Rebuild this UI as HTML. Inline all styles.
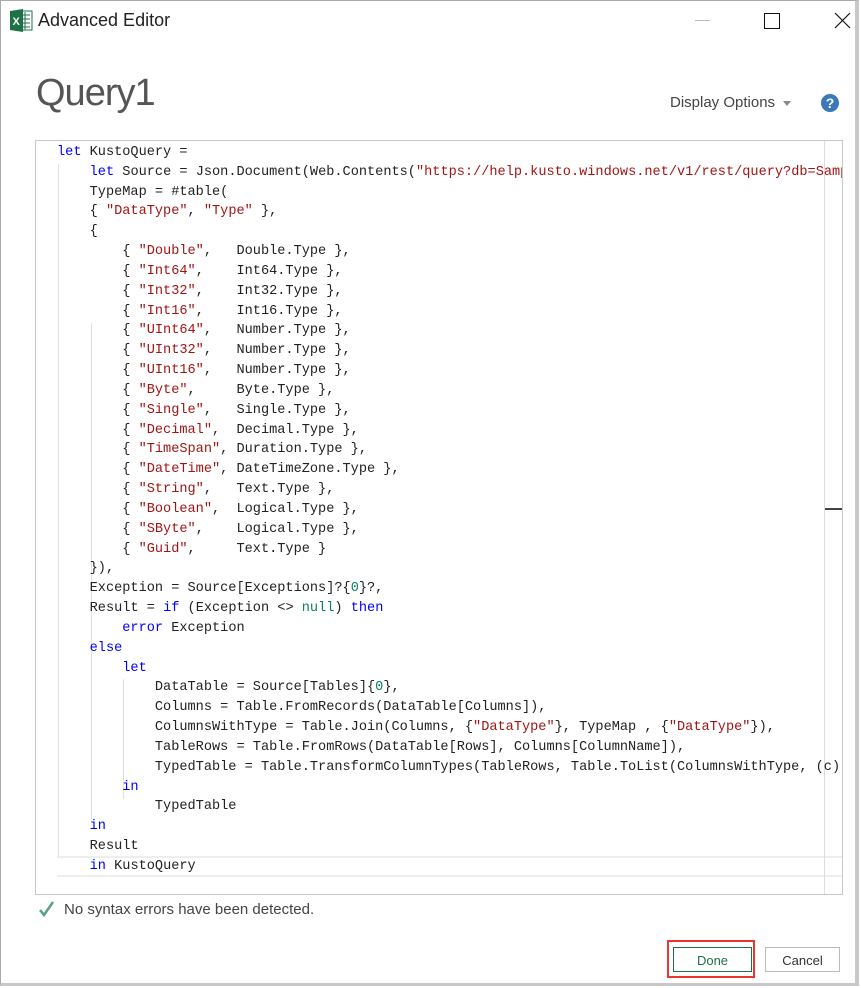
<!DOCTYPE html>
<html><head><meta charset="utf-8"><style>
body{margin:0;width:861px;height:988px;background:#fff;position:relative;overflow:hidden;font-family:"Liberation Sans",sans-serif}
.win{position:absolute;left:0;top:0;width:859px;height:986px;border:1px solid #aaa;border-right:4px solid #c8c8c8;border-bottom:3px solid #c8c8c8;box-sizing:border-box}
.title{position:absolute;left:38px;top:10px;font-size:18px;color:#222}
.q{position:absolute;left:36px;top:72px;font-size:38px;color:#555;letter-spacing:-1px}
.disp{position:absolute;left:670px;top:94px;font-size:15px;color:#444}
.help{position:absolute;left:821px;top:94px;width:18px;height:18px;border-radius:50%;background:#3b78b8;color:#fff;font-weight:bold;font-size:14px;text-align:center;line-height:18px}
.ed{position:absolute;left:35px;top:140px;width:808px;height:755px;border:1px solid #c8c8c8;box-sizing:border-box;overflow:hidden}
.code{position:absolute;left:21px;top:2px;white-space:pre;font-family:"Liberation Mono",monospace;font-size:13.6px;line-height:19.83px;color:#222;width:785px;overflow:hidden}
.k{color:#0000ff}.s{color:#a31515}.n{color:#098658}
.sb{position:absolute;left:788px;top:0;width:1px;height:755px;background:#ddd}
.g{position:absolute;width:1px;background:#e0e0e0}
.cur{position:absolute;left:21px;top:715px;width:785px;height:17px;border-top:2px solid #eee;border-bottom:2px solid #eee}
.btn{position:absolute;top:947px;height:25px;font-size:13px;color:#333;text-align:center;line-height:25px;box-sizing:border-box}
</style></head><body>
<div class="win"></div>
<svg style="position:absolute;left:9px;top:8px" width="25" height="25" viewBox="0 0 25 25"><rect x="8" y="3" width="15" height="19" fill="#fff" stroke="#1e7145"/><path d="M12 7h9M12 11h9M12 15h9M12 19h9M16 4v18" stroke="#1e7145" stroke-width="1"/><path d="M1 3l13-2v23l-13-2z" fill="#1e7145"/><text x="3.5" y="17" font-size="11" font-weight="bold" fill="#fff" font-family="Liberation Sans">X</text></svg>
<div class="title">Advanced Editor</div>
<div style="position:absolute;left:695px;top:20px;width:15px;height:1px;background:#bbb"></div>
<div style="position:absolute;left:764px;top:13px;width:14px;height:14px;border:1px solid #111"></div>
<svg style="position:absolute;left:834px;top:12px" width="17" height="17"><path d="M1 1L16 16M16 1L1 16" stroke="#111" stroke-width="1.2"/></svg>
<div class="q">Query1</div>
<div class="disp">Display Options</div>
<div style="position:absolute;left:783px;top:101px;border-left:4px solid transparent;border-right:4px solid transparent;border-top:5px solid #888"></div>
<div class="help">?</div>
<div class="ed">
<div class="cur"></div>
<div class="g" style="left:22px;top:23px;height:693px"></div>
<div class="g" style="left:55px;top:182px;height:360px"></div>
<div class="g" style="left:55px;top:478px;height:20px"></div>
<div class="g" style="left:55px;top:538px;height:140px"></div>
<div class="g" style="left:87px;top:538px;height:120px"></div>
<div class="sb"></div>
<div class="code"><span class="k">let</span> KustoQuery =
    <span class="k">let</span> Source = Json.Document(Web.Contents(<span class="s">"https://help.kusto.windows.net/v1/rest/query?db=Samples&amp;csl=..."</span>
    TypeMap = #table(
    { <span class="s">"DataType"</span>, <span class="s">"Type"</span> },
    {
        { <span class="s">"Double"</span>,   Double.Type },
        { <span class="s">"Int64"</span>,    Int64.Type },
        { <span class="s">"Int32"</span>,    Int32.Type },
        { <span class="s">"Int16"</span>,    Int16.Type },
        { <span class="s">"UInt64"</span>,   Number.Type },
        { <span class="s">"UInt32"</span>,   Number.Type },
        { <span class="s">"UInt16"</span>,   Number.Type },
        { <span class="s">"Byte"</span>,     Byte.Type },
        { <span class="s">"Single"</span>,   Single.Type },
        { <span class="s">"Decimal"</span>,  Decimal.Type },
        { <span class="s">"TimeSpan"</span>, Duration.Type },
        { <span class="s">"DateTime"</span>, DateTimeZone.Type },
        { <span class="s">"String"</span>,   Text.Type },
        { <span class="s">"Boolean"</span>,  Logical.Type },
        { <span class="s">"SByte"</span>,    Logical.Type },
        { <span class="s">"Guid"</span>,     Text.Type }
    }),
    Exception = Source[Exceptions]?{<span class="n">0</span>}?,
    Result = <span class="k">if</span> (Exception &lt;&gt; <span class="n">null</span>) <span class="k">then</span>
        <span class="k">error</span> Exception
    <span class="k">else</span>
        <span class="k">let</span>
            DataTable = Source[Tables]{<span class="n">0</span>},
            Columns = Table.FromRecords(DataTable[Columns]),
            ColumnsWithType = Table.Join(Columns, {<span class="s">"DataType"</span>}, TypeMap , {<span class="s">"DataType"</span>}),
            TableRows = Table.FromRows(DataTable[Rows], Columns[ColumnName]),
            TypedTable = Table.TransformColumnTypes(TableRows, Table.ToList(ColumnsWithType, (c) =&gt; { c[ColumnName], c[Type] }))
        <span class="k">in</span>
            TypedTable
    <span class="k">in</span>
    Result
    <span class="k">in</span> KustoQuery</div>
<div style="position:absolute;left:789px;top:367px;width:18px;height:2px;background:#444"></div>
</div>
<svg style="position:absolute;left:38px;top:900px" width="18" height="18"><path d="M2 10l4 5L15 2" stroke="#5aa088" stroke-width="2.5" fill="none"/></svg>
<div style="position:absolute;left:64px;top:901px;font-size:15px;color:#444">No syntax errors have been detected.</div>
<div style="position:absolute;left:667px;top:940px;width:88px;height:38px;border:2px solid #e33;box-sizing:border-box"></div>
<div class="btn" style="left:673px;width:79px;border:1px solid #1e7145;color:#1e7145">Done</div>
<div class="btn" style="left:765px;width:75px;border:1px solid #bbb">Cancel</div>
</body></html>
